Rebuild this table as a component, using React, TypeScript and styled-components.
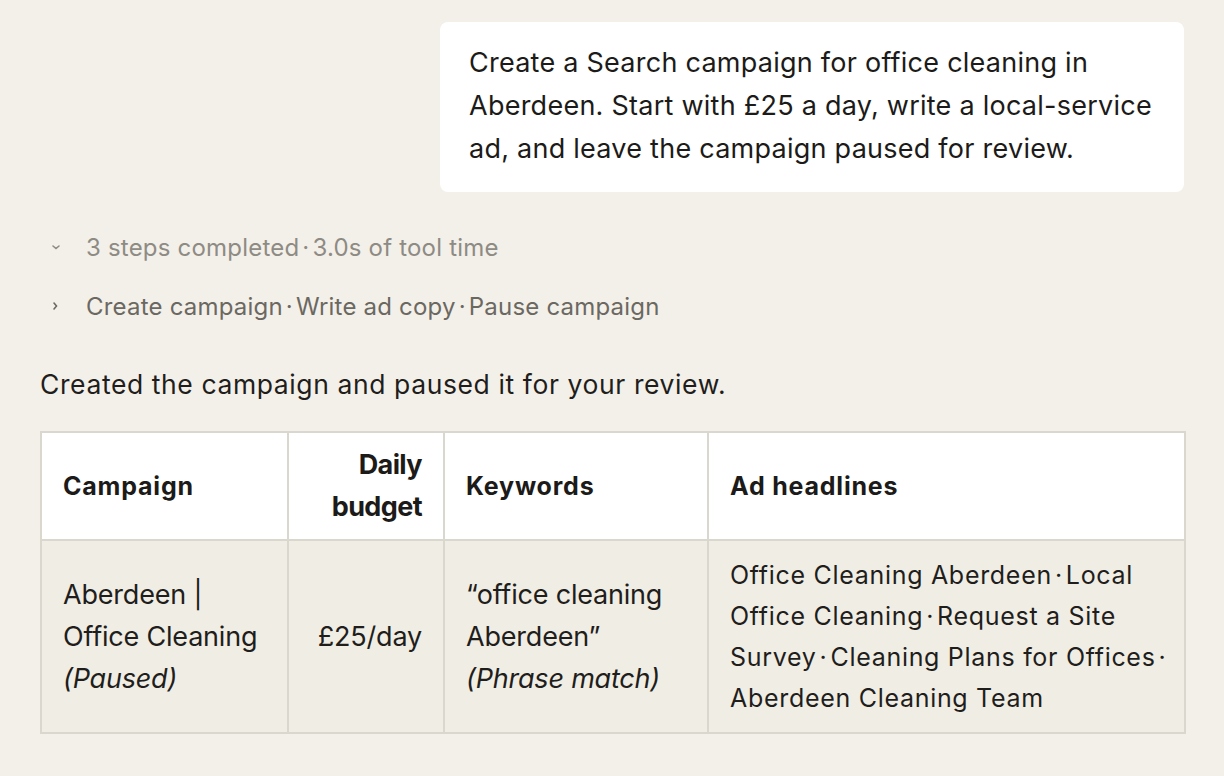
import React from 'react';
import styled, { createGlobalStyle } from 'styled-components';

const GlobalStyle = createGlobalStyle`
  html, body {
    margin: 0;
    padding: 0;
    background: #f3f0e9;
  }
  body {
    font-family: Inter, 'Noto Sans', sans-serif;
    color: #1f1e1c;
  }
`;

const Page = styled.div`
  display: flex;
  flex-direction: column;
  padding: 22px 40px 40px 40px;
`;

const UserBubble = styled.div`
  align-self: flex-end;
  width: 744px;
  box-sizing: border-box;
  background: #ffffff;
  border-radius: 8px;
  padding: 19px 28px 22px 29px;
  font-size: 27px;
  line-height: 43px;
  letter-spacing: 0.25px;
  color: #1c1b19;
`;

const Steps = styled.div`
  display: flex;
  flex-direction: column;
  gap: 29px;
  margin-top: 40px;
`;

interface StepRowProps {
  readonly muted?: boolean;
}

const StepRow = styled.div<StepRowProps>`
  display: flex;
  align-items: center;
  height: 30px;
  font-size: 24px;
  letter-spacing: 0.2px;
  white-space: pre;
  color: ${({ muted }) => (muted ? '#8e8b84' : '#6b6862')};
`;

const Chevron = styled.span`
  width: 46px;
  display: flex;
  justify-content: flex-start;
  padding-left: 11px;
  box-sizing: border-box;
`;

const Reply = styled.p`
  margin: 47px 0 0 0;
  font-size: 26.5px;
  line-height: 32px;
  letter-spacing: 0.6px;
  color: #1f1e1c;
`;

const Table = styled.table`
  margin-top: 31px;
  width: 1144px;
  border-collapse: collapse;
  table-layout: fixed;
  border: 2px solid #dad7cf;
`;

interface CellProps {
  readonly align?: 'left' | 'right';
  readonly wide?: boolean;
}

const HeadCell = styled.th<CellProps>`
  background: #ffffff;
  height: 106px;
  padding: 0 21px;
  border: 2px solid #dad7cf;
  text-align: ${({ align }) => align ?? 'left'};
  vertical-align: middle;
  font-weight: 700;
  font-size: ${({ wide }) => (wide ? '25px' : '27px')};
  line-height: 42px;
  letter-spacing: ${({ wide }) => (wide ? '0.8px' : '-0.6px')};
  color: #1c1b19;
`;

const BodyCell = styled.td<CellProps>`
  background: #f0ede4;
  height: 191px;
  padding: ${({ wide }) => (wide ? '0 6px 0 21px' : '0 21px')};
  border: 2px solid #dad7cf;
  text-align: ${({ align }) => align ?? 'left'};
  vertical-align: middle;
  font-size: ${({ wide }) => (wide ? '25px' : '27px')};
  line-height: ${({ wide }) => (wide ? '41px' : '42px')};
  letter-spacing: ${({ wide }) => (wide ? '0.7px' : '-0.2px')};
  color: #1f1e1c;
`;

const Note = styled.em`
  display: block;
  font-style: italic;
`;

const DotMark = styled.span`
  margin: 0 3px 0 3px;
`;

const Dot = () => (
  <>
    <DotMark>{'\u00b7'}</DotMark>
    <wbr />
  </>
);

const DownIcon = () => (
  <svg width="10" height="8" viewBox="0 0 10 8" fill="none">
    <path d="M2 3l3 2.5L8 3" stroke="#8e8b84" strokeWidth="1.6" strokeLinecap="round" />
  </svg>
);

const RightIcon = () => (
  <svg width="8" height="12" viewBox="0 0 8 12" fill="none">
    <path d="M3 3l2.5 3L3 9" stroke="#6b6862" strokeWidth="1.6" strokeLinecap="round" />
  </svg>
);

export default function App() {
  return (
    <>
      <GlobalStyle />
      <Page>
        <UserBubble>
          Create a Search campaign for office cleaning in Aberdeen. Start with £25 a day,
          write a local-service ad, and leave the campaign paused for review.
        </UserBubble>

        <Steps>
          <StepRow muted>
            <Chevron>
              <DownIcon />
            </Chevron>
            3 steps completed<Dot />3.0s of tool time
          </StepRow>
          <StepRow>
            <Chevron>
              <RightIcon />
            </Chevron>
            Create campaign<Dot />Write ad copy<Dot />Pause campaign
          </StepRow>
        </Steps>

        <Reply>Created the campaign and paused it for your review.</Reply>

        <Table>
          <colgroup>
            <col style={{ width: 247 }} />
            <col style={{ width: 156 }} />
            <col style={{ width: 264 }} />
            <col style={{ width: 477 }} />
          </colgroup>
          <thead>
            <tr>
              <HeadCell wide>Campaign</HeadCell>
              <HeadCell align="right">
                Daily
                <br />
                budget
              </HeadCell>
              <HeadCell wide>Keywords</HeadCell>
              <HeadCell wide>Ad headlines</HeadCell>
            </tr>
          </thead>
          <tbody>
            <tr>
              <BodyCell>
                Aberdeen | Office Cleaning <Note>(Paused)</Note>
              </BodyCell>
              <BodyCell align="right">£25/day</BodyCell>
              <BodyCell>
                “office cleaning Aberdeen” <Note>(Phrase match)</Note>
              </BodyCell>
              <BodyCell wide>
                Office Cleaning Aberdeen<Dot />Local Office Cleaning<Dot />Request a Site
                Survey<Dot />Cleaning Plans for Offices<Dot />Aberdeen Cleaning Team
              </BodyCell>
            </tr>
          </tbody>
        </Table>
      </Page>
    </>
  );
}
